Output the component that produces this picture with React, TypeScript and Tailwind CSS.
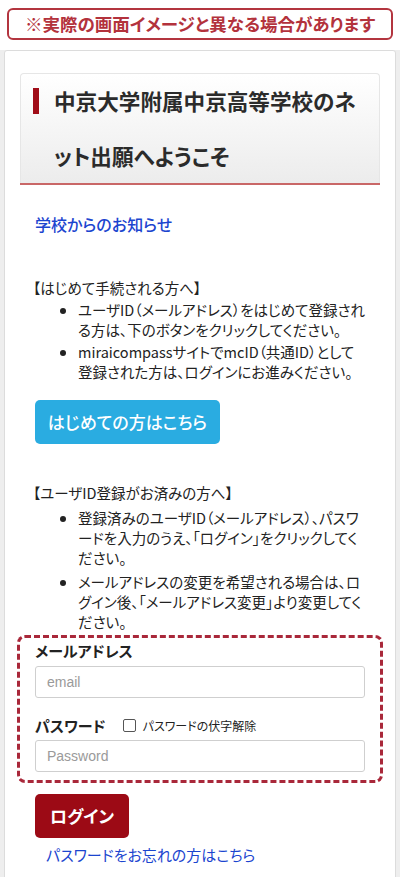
import React from "react";

const font = {
  fontFamily: '"Noto Sans CJK JP", "Noto Sans", sans-serif',
};

export default function App() {
  return (
    <div
      className="w-[400px] min-h-[877px] bg-white text-[#222] [font-feature-settings:'palt']"
      style={font}
    >
      <div className="mx-[7px] mt-[8px] flex h-[32px] items-center justify-center rounded-[6px] border-2 border-[#b3353f] text-[17.5px] font-bold text-[#b3323c]">
        ※実際の画面イメージと異なる場合があります
      </div>

      <div className="mt-[10px] bg-[#eeeeee] px-[4px] pb-[11px]">
        <div className="rounded-[3px] border border-[#dcdcdc] bg-white px-[15px] pt-[22px] pb-[24px]">
          <div className="flex rounded-t-[4px] border border-b-0 border-[#e6e6e6] bg-gradient-to-b from-white to-[#ececec] px-[12px]">
            <span className="mt-[14px] h-[26px] w-[6px] shrink-0 bg-[#a00d18]" />
            <h1 className="ml-[15px] text-[21.6px] leading-[54.5px] font-bold text-[#2b2b2b]">
              中京大学附属中京高等学校のネット出願へようこそ
            </h1>
          </div>
          <div className="h-[2px] bg-[#c96767]" />

          <div className="px-[15px]">
            <p className="mt-[28px] text-[16px] leading-[22px] font-medium text-[#1b45cf]">
              学校からのお知らせ
            </p>

            <div className="mt-[43px] text-[14.5px] leading-[20.5px]">
              <p className="-ml-[2px]">【はじめて手続される方へ】</p>
              <ul className="mt-[1px] list-disc pl-[43px]">
                <li>
                  ユーザID（メールアドレス）をはじめて登録される方は、下のボタンをクリックしてください。
                </li>
                <li className="mt-[1px]">
                  miraicompassサイトでmcID（共通ID）として登録された方は、ログインにお進みください。
                </li>
              </ul>
            </div>

            <button className="mt-[17px] flex h-[44px] w-[185px] items-center justify-center rounded-[5px] bg-[#2aace1] text-[17px] font-medium text-white">
              はじめての方はこちら
            </button>

            <div className="mt-[39px] text-[14.5px] leading-[20px]">
              <p className="-ml-[2px]">【ユーザID登録がお済みの方へ】</p>
              <ul className="mt-[5px] list-disc pl-[43px]">
                <li>
                  登録済みのユーザID（メールアドレス）、パスワードを入力のうえ、「ログイン」をクリックしてください。
                </li>
                <li className="mt-[4px]">
                  メールアドレスの変更を希望される場合は、ログイン後、「メールアドレス変更」より変更してください。
                </li>
              </ul>
            </div>
          </div>

          <div className="-mx-[3px] mt-[3px] rounded-[8px] border-[3px] border-dashed border-[#a9283a] px-[15px] pt-[2px] pb-[8px]">
            <label className="block text-[15px] leading-[22px] font-bold">
              メールアドレス
            </label>
            <input
              type="text"
              placeholder="email"
              className="mt-[4px] h-[32px] w-full rounded-[3px] border border-[#cfcfcf] px-[11px] text-[14px] placeholder:text-[#9a9a9a] focus:outline-none"
              style={{ fontFamily: '"Liberation Sans", "Noto Sans CJK JP", sans-serif' }}
            />

            <div className="mt-[17px] flex items-center">
              <span className="text-[15px] leading-[22px] font-bold">
                パスワード
              </span>
              <label className="ml-[17px] flex items-center gap-[7px] text-[12px]">
                <span className="h-[13px] w-[13px] rounded-[2px] border border-[#555]" />
                パスワードの伏字解除
              </label>
            </div>
            <input
              type="password"
              placeholder="Password"
              className="mt-[3px] h-[32px] w-full rounded-[3px] border border-[#cfcfcf] px-[11px] text-[14px] placeholder:text-[#9a9a9a] focus:outline-none"
              style={{ fontFamily: '"Liberation Sans", "Noto Sans CJK JP", sans-serif' }}
            />
          </div>

          <div className="px-[15px]">
            <button className="mt-[11px] flex h-[44px] w-[94px] items-center justify-center rounded-[5px] bg-[#9c0a15] text-[17px] font-bold text-white">
              ログイン
            </button>
            <p className="mt-[6px] pl-[11px] text-[15px] leading-[22px] text-[#1b45cf]">
              パスワードをお忘れの方はこちら
            </p>
          </div>
        </div>
      </div>
    </div>
  );
}
